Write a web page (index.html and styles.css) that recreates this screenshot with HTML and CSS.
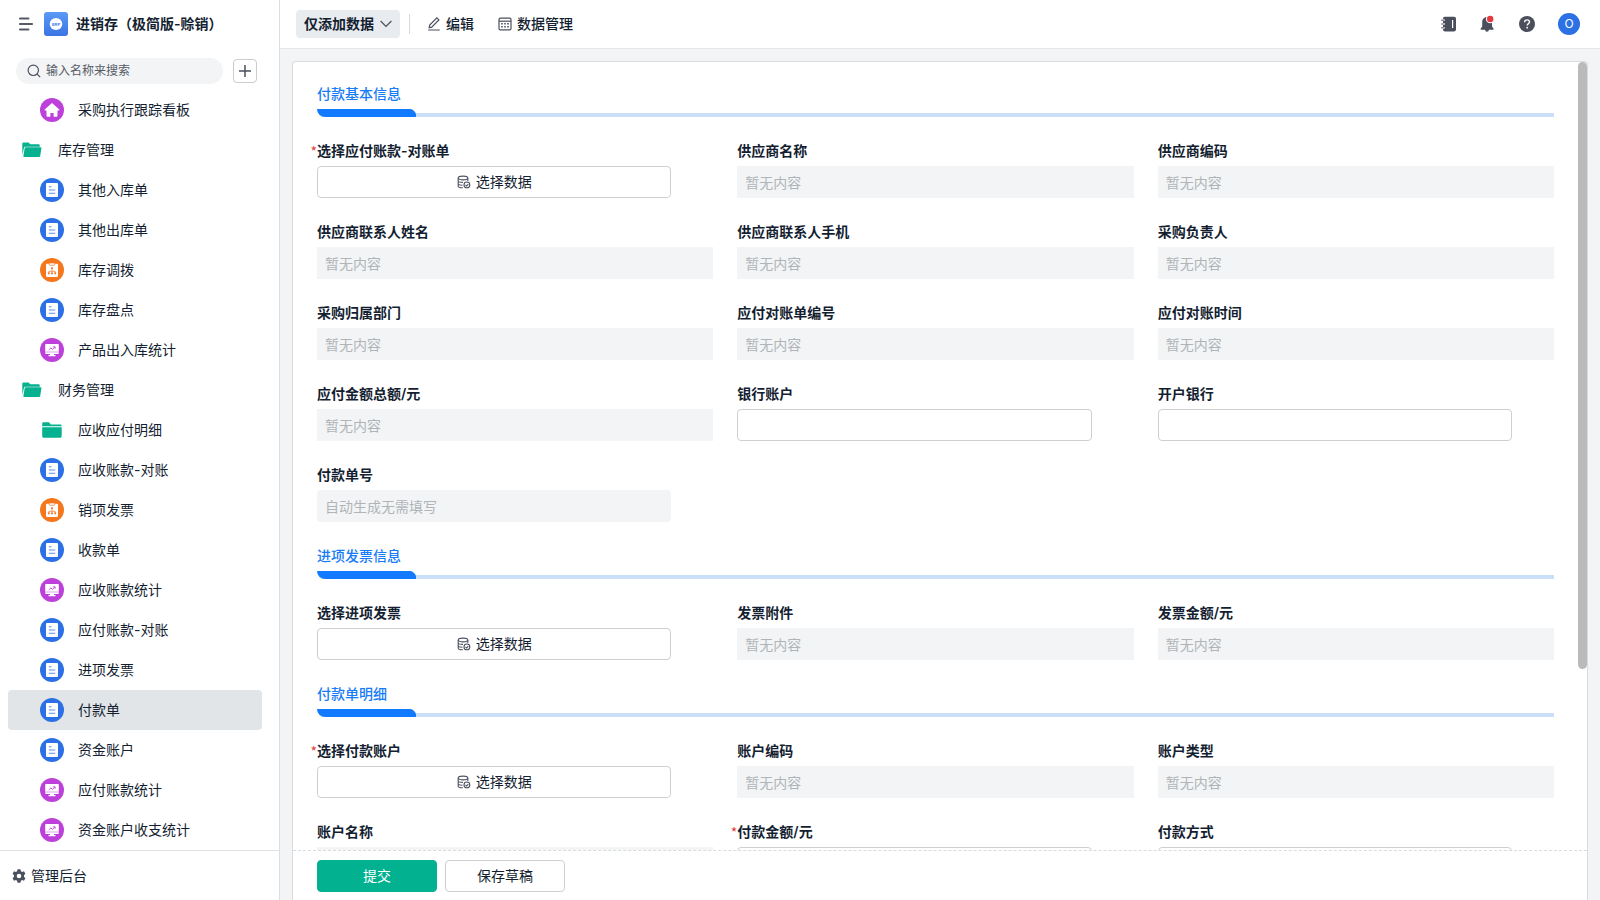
FILE: index.html
```html
<!DOCTYPE html>
<html lang="zh-CN">
<head>
<meta charset="utf-8">
<title>付款单</title>
<link rel="stylesheet" href="styles.css">
</head>
<body>
<svg class="sprite" aria-hidden="true">
  <symbol id="i-form" viewBox="0 0 24 24">
    <circle cx="12" cy="12" r="12" fill="#2b70e4"/>
    <rect x="6" y="5" width="12" height="14" rx="1" fill="#fff"/>
    <path d="M8.800 8.800h2.600M8.800 12h6.500M8.800 15.300h6.500" stroke="#5b8fea" stroke-width="1.100"/>
  </symbol>
  <symbol id="i-flow" viewBox="0 0 24 24">
    <circle cx="12" cy="12" r="12" fill="#f5771d"/>
    <path d="M7 5.800h10a1 1 0 0 1 1 1V18a1 1 0 0 1-1 1H7a1 1 0 0 1-1-1V6.800a1 1 0 0 1 1-1z" fill="#fff"/>
    <path d="M9.200 5h5.600v1.300a1 1 0 0 1-1 1h-3.600a1 1 0 0 1-1-1z" fill="#fff" stroke="#f5771d" stroke-width=".7"/>
    <path d="M12 10.500v4.500M8.800 15v-1.700h6.400V15" fill="none" stroke="#f5771d" stroke-width=".7"/>
    <path d="M11.100 9.300h1.800v1.800h-1.800zM7.900 14.600h1.800v1.700H7.900zM11.100 14.600h1.800v1.700h-1.800zM14.300 14.600h1.800v1.700h-1.800z" fill="#f5771d"/>
  </symbol>
  <symbol id="i-chart" viewBox="0 0 24 24">
    <circle cx="12" cy="12" r="12" fill="#bc40d9"/>
    <path d="M6 6h12a.8.8 0 0 1 .8.8v7H5.200v-7A.8.8 0 0 1 6 6zM5.200 14.300h13.600v1a.8.8 0 0 1-.8.800h-4v1h1.500V18.200h-7V17.100H10v-1H6a.8.8 0 0 1-.8-.8z" fill="#fff"/>
    <path d="M8.800 11.800l2.100-1.900 1.500 1.500 2.400-2.300M13.200 8.800h1.900v1.900" fill="none" stroke="#bc40d9" stroke-width=".9"/>
  </symbol>
  <symbol id="i-home" viewBox="0 0 24 24">
    <circle cx="12" cy="12" r="12" fill="#bc40d9"/>
    <path d="M12 5l7.300 6.600c.3.4.1.900-.4.900h-1.400v5.300a1 1 0 0 1-1 1h-2.900V14.900h-3.200v3.900H7.500a1 1 0 0 1-1-1v-5.300H5.100c-.5 0-.7-.5-.4-.9z" fill="#fff"/>
  </symbol>
  <symbol id="i-open" viewBox="0 0 20 16">
    <path d="M.3 13V1.800A1.300 1.300 0 0 1 1.600.500h4.900L8.300 2.200h8.200A1.300 1.300 0 0 1 17.800 3.500V4.700H3.200a1.200 1.200 0 0 0-1.200 1z" fill="#06b18f"/>
    <path d="M3.600 5.200h15a.8.8 0 0 1 .8 1l-1.200 7.900a1.200 1.200 0 0 1-1.200.9H2.300a.9.9 0 0 1-.9-1.100L2.700 5.900a.9.9 0 0 1 .9-.7z" fill="#06b18f"/>
  </symbol>
  <symbol id="i-folder" viewBox="0 0 20 16">
    <path d="M.2 4.300V1.500A1.200 1.200 0 0 1 1.400.300h5.500l2 2.100h9.500a1.300 1.300 0 0 1 1.300 1.300v.6zM.2 5.300h19.500v9a1.400 1.400 0 0 1-1.400 1.400H1.600a1.400 1.400 0 0 1-1.400-1.400z" fill="#06b18f"/>
  </symbol>
  <symbol id="i-data" viewBox="0 0 14 14">
    <g fill="none" stroke="#4b505d" stroke-width="1.100">
      <ellipse cx="6" cy="3" rx="4.800" ry="1.900"/>
      <path d="M1.200 3v8.200c0 1 1.900 1.500 4.600 1.600M10.800 3v3M1.200 5.900C1.200 7 3.600 7.400 6 7.400M1.200 8.700c0 1 1.700 1.400 4.300 1.500"/>
      <circle cx="9.900" cy="9.900" r="2.900"/>
      <path d="M8.500 9.900l1.100 1.100 1.700-1.900"/>
    </g>
  </symbol>
</svg>
<div class="app">
  <aside class="sidebar">
    <div class="brand">
      <button class="plain" aria-label="收起菜单"><svg width="14" height="14" viewBox="0 0 14 14"><path d="M.8 1.500H9.500M.8 7h12.400M.8 12.500H9.500" stroke="#565a66" stroke-width="1.900" stroke-linecap="round"/></svg></button>
      <svg class="logo" width="24" height="24" viewBox="0 0 24 24"><defs><linearGradient id="lg" x1="0" y1="0" x2="0" y2="1"><stop offset="0" stop-color="#5b9af5"/><stop offset="1" stop-color="#3a74e4"/></linearGradient></defs><rect width="24" height="24" rx="3" fill="url(#lg)"/><ellipse cx="12" cy="12" rx="6.300" ry="6" fill="#fff"/><text class="logo-text" x="12" y="13.500" text-anchor="middle">ERP</text></svg>
      <h1>进销存（极简版-赊销）</h1>
    </div>
    <div class="search-row">
      <label class="search"><svg width="14" height="14" viewBox="0 0 14 14"><circle cx="6.300" cy="6.300" r="5.200" fill="none" stroke="#4b505d" stroke-width="1.200"/><path d="M10.200 10.200l3 3" stroke="#4b505d" stroke-width="1.200"/></svg><input type="text" placeholder="输入名称来搜索" aria-label="输入名称来搜索"></label>
      <button class="add" aria-label="新建"><svg width="12" height="12" viewBox="0 0 12 12"><path d="M6 0v12M0 6h12" stroke="#4b505d" stroke-width="1.500"/></svg></button>
    </div>
    <nav class="menu">
      <a href="#" class="item sub"><svg class="round"><use href="#i-home"/></svg>采购执行跟踪看板</a>
      <a href="#" class="item"><svg class="folder"><use href="#i-open"/></svg>库存管理</a>
      <a href="#" class="item sub"><svg class="round"><use href="#i-form"/></svg>其他入库单</a>
      <a href="#" class="item sub"><svg class="round"><use href="#i-form"/></svg>其他出库单</a>
      <a href="#" class="item sub"><svg class="round"><use href="#i-flow"/></svg>库存调拨</a>
      <a href="#" class="item sub"><svg class="round"><use href="#i-form"/></svg>库存盘点</a>
      <a href="#" class="item sub"><svg class="round"><use href="#i-chart"/></svg>产品出入库统计</a>
      <a href="#" class="item"><svg class="folder"><use href="#i-open"/></svg>财务管理</a>
      <a href="#" class="item sub"><svg class="folder"><use href="#i-folder"/></svg>应收应付明细</a>
      <a href="#" class="item sub"><svg class="round"><use href="#i-form"/></svg>应收账款-对账</a>
      <a href="#" class="item sub"><svg class="round"><use href="#i-flow"/></svg>销项发票</a>
      <a href="#" class="item sub"><svg class="round"><use href="#i-form"/></svg>收款单</a>
      <a href="#" class="item sub"><svg class="round"><use href="#i-chart"/></svg>应收账款统计</a>
      <a href="#" class="item sub"><svg class="round"><use href="#i-form"/></svg>应付账款-对账</a>
      <a href="#" class="item sub"><svg class="round"><use href="#i-form"/></svg>进项发票</a>
      <a href="#" class="item sub active" aria-current="page"><svg class="round"><use href="#i-form"/></svg>付款单</a>
      <a href="#" class="item sub"><svg class="round"><use href="#i-form"/></svg>资金账户</a>
      <a href="#" class="item sub"><svg class="round"><use href="#i-chart"/></svg>应付账款统计</a>
      <a href="#" class="item sub"><svg class="round"><use href="#i-chart"/></svg>资金账户收支统计</a>
    </nav>
    <a href="#" class="admin"><svg width="14" height="14" viewBox="0 0 14 14"><path fill="#4b505d" fill-rule="evenodd" d="M5.600.3h2.800l.5 1.900 1.200.7 1.900-.6 1.400 2.500L12 6.200v1.600l1.400 1.400-1.400 2.500-1.900-.6-1.200.7-.5 1.900H5.600l-.5-1.900-1.200-.7-1.900.6L.6 9.200 2 7.800V6.200L.6 4.800 2 2.300l1.900.6 1.200-.7zM7 4.700a2.300 2.300 0 1 0 0 4.600 2.300 2.300 0 0 0 0-4.600z"/></svg>管理后台</a>
  </aside>

  <div class="content">
    <header class="topbar">
      <button class="mode">仅添加数据<svg width="12" height="8" viewBox="0 0 12 8"><path d="M.6 1l5.400 5.500L11.400 1" fill="none" stroke="#4b505d" stroke-width="1.200"/></svg></button>
      <span class="divider"></span>
      <button class="action"><svg width="14" height="14" viewBox="0 0 14 14"><path d="M1.200 13h11.600M2.200 10.700l.5-2.600 7.200-7.200 2 2-7.200 7.200z" fill="none" stroke="#4b505d" stroke-width="1.200"/></svg>编辑</button>
      <button class="action"><svg width="14" height="14" viewBox="0 0 14 14"><rect x="1" y="1.100" width="12" height="11.800" rx="1.400" fill="none" stroke="#4b505d" stroke-width="1.200"/><path d="M1 4.200h12" stroke="#4b505d" stroke-width="1.200"/><path d="M3.200 6.800h1.600M6.200 6.800h1.600M9.200 6.800h1.600M3.200 9.700h1.600M6.200 9.700h1.600M9.200 9.700h1.600" stroke="#4b505d" stroke-width="1.500"/></svg>数据管理</button>
      <div class="tools">
        <button class="plain" aria-label="通讯录"><svg width="16" height="16" viewBox="0 0 16 16"><rect x="2" y=".8" width="13" height="14.600" rx="1.800" fill="#4b4f5c"/><path d="M.4 4.200h3.200M.4 8h3.200M.4 11.800h3.200" stroke="#fff" stroke-width="1.800"/><path d="M.2 4.200h2.600M.2 8h2.600M.2 11.800h2.600" stroke="#4b4f5c" stroke-width="1"/><path d="M11.600 4v8" stroke="#fff" stroke-width="1.200"/></svg></button>
        <button class="plain" aria-label="消息"><svg width="16" height="18" viewBox="0 0 16 18"><path d="M7 2.100c3.100 0 5 2.300 5 5.100v4.200l1.500 2.100v1.300H8.900a1.900 1.900 0 0 1-3.800 0H.7v-1.300l1.500-2.100V7.200c0-2.800 1.800-5.100 4.800-5.100z" fill="#4b4f5c"/><circle cx="10.200" cy="4" r="4.300" fill="#fff"/><circle cx="10.200" cy="4" r="3.200" fill="#e5393d"/></svg></button>
        <button class="plain" aria-label="帮助"><svg width="16" height="16" viewBox="0 0 16 16"><circle cx="8" cy="8" r="8" fill="#4b4f5c"/><path d="M5.600 6.300c0-1.500 1-2.400 2.500-2.400s2.400.9 2.400 2.100c0 1.600-2.300 1.600-2.300 3.500" fill="none" stroke="#fff" stroke-width="1.400"/><circle cx="8.200" cy="11.700" r=".9" fill="#fff"/></svg></button>
        <button class="avatar" aria-label="账户">O</button>
      </div>
    </header>

    <main class="stage">
      <form class="card">
        <div class="viewport">
          <div class="fields">
            <h2 class="section">付款基本信息</h2>
            <div class="field"><label class="required" for="f1">选择应付账款-对账单</label><button type="button" id="f1" class="pick"><svg><use href="#i-data"/></svg>选择数据</button></div>
            <div class="field"><label for="f2">供应商名称</label><input id="f2" placeholder="暂无内容" disabled></div>
            <div class="field"><label for="f3">供应商编码</label><input id="f3" placeholder="暂无内容" disabled></div>
            <div class="field"><label for="f4">供应商联系人姓名</label><input id="f4" placeholder="暂无内容" disabled></div>
            <div class="field"><label for="f5">供应商联系人手机</label><input id="f5" placeholder="暂无内容" disabled></div>
            <div class="field"><label for="f6">采购负责人</label><input id="f6" placeholder="暂无内容" disabled></div>
            <div class="field"><label for="f7">采购归属部门</label><input id="f7" placeholder="暂无内容" disabled></div>
            <div class="field"><label for="f8">应付对账单编号</label><input id="f8" placeholder="暂无内容" disabled></div>
            <div class="field"><label for="f9">应付对账时间</label><input id="f9" placeholder="暂无内容" disabled></div>
            <div class="field"><label for="f10">应付金额总额/元</label><input id="f10" placeholder="暂无内容" disabled></div>
            <div class="field"><label for="f11">银行账户</label><input id="f11" class="editable"></div>
            <div class="field"><label for="f12">开户银行</label><input id="f12" class="editable"></div>
            <div class="field"><label for="f13">付款单号</label><input id="f13" class="short" placeholder="自动生成无需填写" disabled></div>

            <h2 class="section">进项发票信息</h2>
            <div class="field"><label for="f14">选择进项发票</label><button type="button" id="f14" class="pick"><svg><use href="#i-data"/></svg>选择数据</button></div>
            <div class="field"><label for="f15">发票附件</label><input id="f15" placeholder="暂无内容" disabled></div>
            <div class="field"><label for="f16">发票金额/元</label><input id="f16" placeholder="暂无内容" disabled></div>

            <h2 class="section">付款单明细</h2>
            <div class="field"><label class="required" for="f17">选择付款账户</label><button type="button" id="f17" class="pick"><svg><use href="#i-data"/></svg>选择数据</button></div>
            <div class="field"><label for="f18">账户编码</label><input id="f18" placeholder="暂无内容" disabled></div>
            <div class="field"><label for="f19">账户类型</label><input id="f19" placeholder="暂无内容" disabled></div>
            <div class="field"><label for="f20">账户名称</label><input id="f20" disabled></div>
            <div class="field"><label class="required" for="f21">付款金额/元</label><input id="f21" class="editable"></div>
            <div class="field"><label for="f22">付款方式</label><input id="f22" class="editable"></div>
          </div>
          <div class="thumb"></div>
        </div>
        <div class="actions">
          <button type="button" class="btn primary">提交</button>
          <button type="button" class="btn">保存草稿</button>
        </div>
      </form>
    </main>
  </div>
</div>
</body>
</html>
```

FILE: styles.css
```css
* { box-sizing: border-box; }

body {
  margin: 0;
  font: 14px/22px Inter, "Noto Sans CJK SC", sans-serif;
  color: #141e31;
  background: #f2f4f6;
}

button, input { font: inherit; color: inherit; margin: 0; }
button { cursor: pointer; }
a { color: inherit; text-decoration: none; }
svg { flex: none; display: block; }
h1, h2 { margin: 0; font-size: 14px; font-weight: 500; }

.sprite { display: none; }
.plain { padding: 0; border: 0; background: none; }

.app { display: flex; height: 100vh; overflow: hidden; }

/* Sidebar */
.sidebar {
  flex: none;
  display: flex;
  flex-direction: column;
  width: 280px;
  background: #fff;
  border-right: 1px solid #dcdfe2;
}
.brand { display: flex; align-items: center; height: 48px; padding-left: 19px; }
.logo { margin: 0 8px 0 11px; }
.logo-text { font-family: "Liberation Sans", sans-serif; font-size: 4px; font-weight: 700; fill: #3a74e4; }
.brand h1 { font-weight: 600; }
.search-row { display: flex; align-items: center; gap: 10px; height: 42px; padding: 4px 22px 0 16px; }
.search {
  flex: 1;
  display: flex;
  align-items: center;
  gap: 5px;
  min-width: 0;
  height: 26px;
  padding: 0 11px;
  border-radius: 13px;
  background: #f2f4f5;
}
.search input { flex: 1; min-width: 0; padding: 0; border: 0; outline: 0; background: none; font-size: 12px; }
.search input::placeholder { color: #565b66; opacity: 1; }
.add {
  display: grid;
  place-items: center;
  width: 24px;
  height: 24px;
  padding: 0;
  border: 1px solid #c9ccd0;
  border-radius: 4px;
  background: #fff;
}
.menu { flex: 1; min-height: 0; overflow: hidden; padding: 0 17px 0 8px; }
.item { display: flex; align-items: center; gap: 16px; height: 40px; padding-left: 14px; border-radius: 4px; }
.sub { padding-left: 32px; gap: 14px; }
.active { background: #e1e5e8; }
.round { width: 24px; height: 24px; }
.folder { width: 20px; height: 16px; }
.sub .folder { margin: 0 2px; }
.admin {
  display: flex;
  align-items: center;
  gap: 5px;
  height: 50px;
  padding-left: 12px;
  border-top: 1px solid #dfe2e5;
}

/* Top bar */
.content { flex: 1; min-width: 0; display: flex; flex-direction: column; }
.topbar {
  flex: none;
  display: flex;
  align-items: center;
  height: 49px;
  padding: 0 20px 0 16px;
  background: #fff;
  border-bottom: 1px solid #e4e7ea;
}
.mode {
  display: flex;
  align-items: center;
  gap: 6px;
  height: 28px;
  padding: 0 8px;
  border: 0;
  border-radius: 4px;
  background: #e9ecef;
  font-weight: 600;
}
.divider { width: 1px; height: 20px; margin: 0 17px 0 9px; background: #d5d8dc; }
.action { display: flex; align-items: center; gap: 5px; margin-right: 24px; padding: 0; border: 0; background: none; font-weight: 500; }
.tools { display: flex; align-items: center; gap: 23px; margin-left: auto; }
.avatar {
  width: 22px;
  height: 22px;
  padding: 0;
  border: 0;
  border-radius: 50%;
  background: #2b70e4;
  color: #fff;
  font-size: 12px;
  line-height: 22px;
}

/* Form card */
.stage { flex: 1; min-height: 0; display: flex; padding: 12px 12px 0; }
.card {
  flex: 1;
  min-width: 0;
  display: flex;
  flex-direction: column;
  border: 1px solid #d9dcdf;
  border-bottom: 0;
  border-radius: 4px 4px 0 0;
  background: #fff;
}
.viewport { position: relative; flex: 1; min-height: 0; overflow: hidden; }
.fields {
  display: grid;
  grid-template-columns: repeat(3, minmax(0, 1fr));
  gap: 23px 24px;
  padding: 21px 33px 24px 24px;
}
.section { grid-column: 1 / -1; color: #177cf5; line-height: 22px; }
.section::after {
  content: "";
  display: block;
  height: 8px;
  margin-top: 4px;
  background:
    radial-gradient(circle at 0 100%, #127aff 8px, transparent 9px) 91px 0 / 8px 8px no-repeat,
    linear-gradient(#127aff, #127aff) 0 0 / 91px 8px no-repeat,
    linear-gradient(#cae0fa, #cae0fa) 0 4px / 100% 4px no-repeat;
  border-bottom-left-radius: 8px;
}
.field { display: flex; flex-direction: column; gap: 4px; min-width: 0; }
.field label { position: relative; font-weight: 600; }
.required::before { content: "*"; position: absolute; right: 100%; color: #e5393d; font-weight: 400; font-family: "Noto Sans CJK SC", sans-serif; }
.field input {
  width: 100%;
  height: 32px;
  padding: 0 8px;
  border: 0;
  background: #f2f4f5;
}
.field input::placeholder { color: #b0b4b9; opacity: 1; }
.field .editable, .pick { width: calc(100% - 42px); border: 1px solid #cdd0d3; border-radius: 4px; background: #fff; }
.field .short { width: calc(100% - 42px); border-radius: 4px; }
.pick { display: flex; align-items: center; justify-content: center; gap: 5px; height: 32px; padding: 0; }
.pick svg { width: 14px; height: 14px; }
.thumb {
  position: absolute;
  top: 0;
  right: 0;
  width: 9px;
  height: 77%;
  border-radius: 5px;
  background: #b8babc;
}
.actions {
  flex: none;
  display: flex;
  gap: 8px;
  padding: 9px 24px 8px;
  border-top: 1px dashed #d9dcdf;
}
.btn { width: 120px; height: 32px; padding: 0; border: 1px solid #cdd0d3; border-radius: 4px; background: #fff; }
.primary { border-color: #02b18f; background: #02b18f; color: #fff; }
```
